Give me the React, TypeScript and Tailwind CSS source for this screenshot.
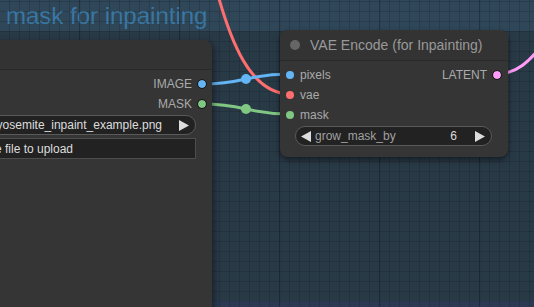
import React from 'react';

const font = { fontFamily: '"Liberation Sans", Arial, sans-serif' };

function Dot({ color, ring }: { color: string; ring?: boolean }) {
  return (
    <span
      className={`block w-[8px] h-[8px] rounded-full shrink-0 ${ring ? 'outline outline-[1.5px] outline-[#1b1b1b]' : ''}`}
      style={{ backgroundColor: color }}
    />
  );
}

function ArrowLeft() {
  return (
    <svg width="10" height="11" viewBox="0 0 10 11" className="shrink-0">
      <polygon points="10,0 10,11 0,5.5" fill="#dddddd" />
    </svg>
  );
}

function ArrowRight() {
  return (
    <svg width="10" height="11" viewBox="0 0 10 11" className="shrink-0">
      <polygon points="0,0 0,11 10,5.5" fill="#dddddd" />
    </svg>
  );
}

function Grid() {
  return (
    <svg className="absolute inset-0" width="534" height="307">
      <defs>
        <pattern id="minor" width="10" height="10" patternUnits="userSpaceOnUse" x="9" y="1">
          <path d="M0.5 0 V10 M0 0.5 H10" stroke="rgba(0,0,0,0.13)" strokeWidth="1" fill="none" />
        </pattern>
        <pattern id="major" width="100" height="100" patternUnits="userSpaceOnUse" x="79" y="1">
          <path d="M0.5 0 V100" stroke="rgba(0,0,0,0.18)" strokeWidth="1.5" fill="none" />
        </pattern>
      </defs>
      <rect width="534" height="307" fill="url(#minor)" />
      <rect width="534" height="307" fill="url(#major)" />
    </svg>
  );
}

function Links() {
  return (
    <svg className="absolute inset-0" width="534" height="307">
      <path d="M216 -12 C230 40, 250 94, 290 94" stroke="#ff6e6e" strokeWidth="3" fill="none" />
      <path d="M202 84 C246 84, 246 74, 290 74" stroke="#64b5f6" strokeWidth="3" fill="none" />
      <circle cx="246" cy="79" r="5" fill="#64b5f6" />
      <path d="M202 104 C246 104, 246 114, 290 114" stroke="#81c784" strokeWidth="3" fill="none" />
      <circle cx="246" cy="109" r="5" fill="#81c784" />
      <path d="M497 74 C516 74, 530 62, 546 40" stroke="#ff9cf9" strokeWidth="3" fill="none" />
    </svg>
  );
}

function LoadImageNode() {
  return (
    <div className="absolute left-[-175px] top-[40px] w-[387px] h-[300px] rounded-tr-[8px] bg-[#353535] shadow-[2px_2px_6px_rgba(0,0,0,0.45)] flex flex-col">
      <div className="h-[30px] bg-[#333333] rounded-tr-[8px] border-b border-[#2a2a2a]" />
      <div className="flex flex-col pt-[4px]">
        <div className="h-[20px] flex items-center justify-end gap-[6px] pr-[6px]">
          <span className="text-[12px] text-[#aaaaaa]">IMAGE</span>
          <Dot color="#64b5f6" ring />
        </div>
        <div className="h-[20px] flex items-center justify-end gap-[6px] pr-[6px]">
          <span className="text-[12px] text-[#aaaaaa]">MASK</span>
          <Dot color="#81c784" ring />
        </div>
        <div className="mt-[1px] ml-[15px] mr-[16px] h-[20px] rounded-full bg-[#222222] border border-[#5a5a5a] flex items-center justify-end pr-[6px] gap-[17px]">
          <span className="text-[12px] text-[#dddddd]">yosemite_inpaint_example.png</span>
          <ArrowRight />
        </div>
        <div className="mt-[3px] ml-[15px] mr-[16px] h-[21px] bg-[#222222] border border-[#4d4d4d] flex items-center justify-center">
          <span className="text-[12px] text-[#dddddd]">choose file to upload</span>
        </div>
      </div>
    </div>
  );
}

function VaeEncodeNode() {
  return (
    <div className="absolute left-[280px] top-[30px] w-[228px] h-[127px] rounded-[8px] bg-[#353535] shadow-[0_3px_6px_rgba(0,0,0,0.5)] flex flex-col">
      <div className="h-[31px] flex items-center pl-[10px] gap-[10px] border-b border-[#2a2a2a] rounded-t-[8px] bg-[#333333]">
        <span className="block w-[10px] h-[10px] rounded-full bg-[#666666]" />
        <span className="text-[14px] text-[#999999]">VAE Encode (for Inpainting)</span>
      </div>
      <div className="flex flex-col pt-[4px]">
        <div className="h-[20px] flex items-center justify-between pl-[6px] pr-[7px]">
          <div className="flex items-center gap-[6px]">
            <Dot color="#64b5f6" />
            <span className="text-[12px] text-[#aaaaaa]">pixels</span>
          </div>
          <div className="flex items-center gap-[6px]">
            <span className="text-[12px] text-[#aaaaaa]">LATENT</span>
            <Dot color="#ff9cf9" ring />
          </div>
        </div>
        <div className="h-[20px] flex items-center gap-[6px] pl-[6px]">
          <Dot color="#ff6e6e" />
          <span className="text-[12px] text-[#aaaaaa]">vae</span>
        </div>
        <div className="h-[20px] flex items-center gap-[6px] pl-[6px]">
          <Dot color="#81c784" />
          <span className="text-[12px] text-[#aaaaaa]">mask</span>
        </div>
        <div className="mt-[1px] ml-[15px] mr-[16px] h-[20px] rounded-full bg-[#222222] border border-[#5a5a5a] flex items-center pl-[5px] pr-[6px]">
          <ArrowLeft />
          <span className="ml-[4px] text-[12px] text-[#a0a0a0]">grow_mask_by</span>
          <span className="ml-auto text-[12px] text-[#dddddd]">6</span>
          <span className="ml-[18px]"><ArrowRight /></span>
        </div>
      </div>
    </div>
  );
}

export default function App() {
  return (
    <div className="relative w-[534px] h-[307px] overflow-hidden bg-[#293a47]" style={font}>
      <div className="absolute inset-0 flex flex-col">
        <div className="h-[31px] bg-[#2f4759] pl-[6px] text-[24px] leading-[31px] text-[#3a77a2]">
          mask for inpainting
        </div>
        <div className="flex-1" />
        <div className="h-[6px] bg-[#2b3a52] border-t border-[#2e3c5e]" />
      </div>
      <Grid />
      <Links />
      <LoadImageNode />
      <VaeEncodeNode />
    </div>
  );
}
